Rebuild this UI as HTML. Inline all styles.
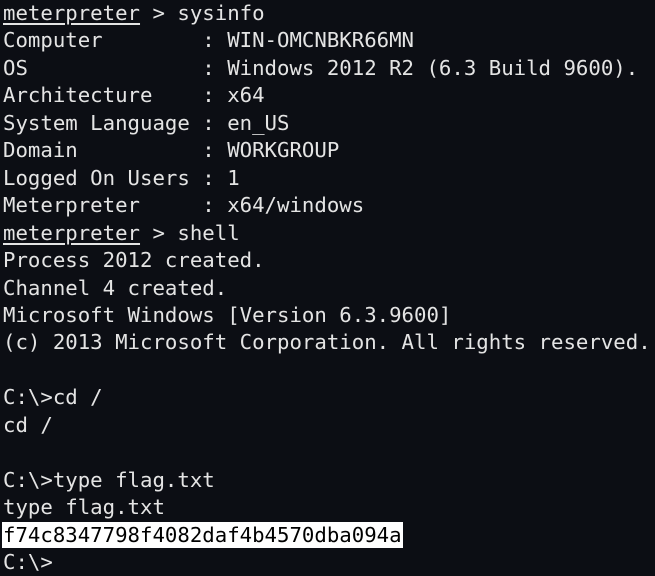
<!DOCTYPE html>
<html><head><meta charset="utf-8"><style>
html,body{margin:0;padding:0;background:#0c0e14;width:655px;height:576px;overflow:hidden}
pre{margin:0;padding:0 0 0 3px;font-family:"DejaVu Sans Mono","Liberation Mono",monospace;font-size:20.7px;line-height:27.45px;color:#e4e4e4;white-space:pre}
u{text-decoration:underline;text-underline-offset:3px}
.hl{background:#fff;color:#000;outline:1px solid #fff}
</style></head><body><pre><u>meterpreter</u> &gt; sysinfo
Computer        : WIN-OMCNBKR66MN
OS              : Windows 2012 R2 (6.3 Build 9600).
Architecture    : x64
System Language : en_US
Domain          : WORKGROUP
Logged On Users : 1
Meterpreter     : x64/windows
<u>meterpreter</u> &gt; shell
Process 2012 created.
Channel 4 created.
Microsoft Windows [Version 6.3.9600]
(c) 2013 Microsoft Corporation. All rights reserved.

C:\&gt;cd /
cd /

C:\&gt;type flag.txt
type flag.txt
<span class="hl">f74c8347798f4082daf4b4570dba094a</span>
C:\&gt;</pre></body></html>
